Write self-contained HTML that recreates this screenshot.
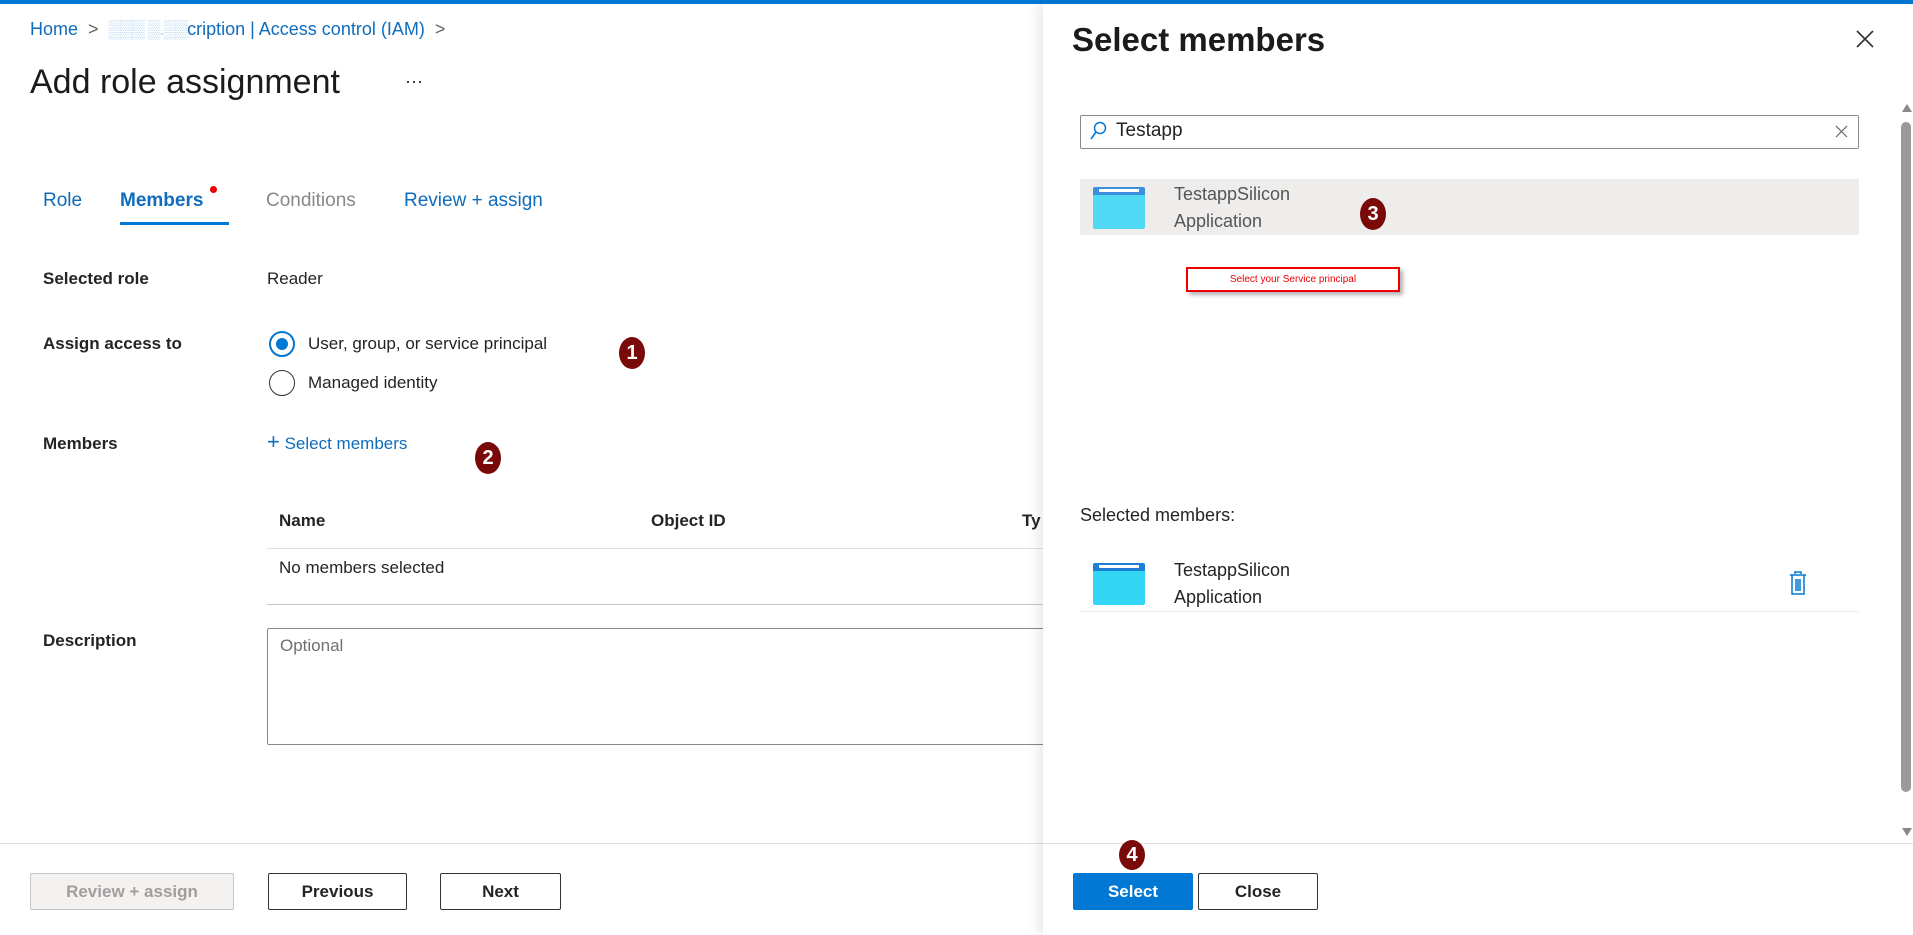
<!DOCTYPE html>
<html><head><meta charset="utf-8"><style>
*{box-sizing:border-box;margin:0;padding:0}
body{width:1913px;height:935px;overflow:hidden;background:#fff;font-family:"Liberation Sans",sans-serif;color:#242424;position:relative;font-size:17px}
.a{position:absolute;white-space:nowrap}
.blue{color:#0f6cbd}
.b{font-weight:bold}
.badge{position:absolute;width:26px;height:32px;border-radius:50%;background:#7a0a0a;color:#fff;font-weight:bold;font-size:20px;text-align:center;line-height:32px}
.btn{position:absolute;height:37px;border:1px solid #333;border-radius:2px;text-align:center;line-height:35px;font-size:17px;font-weight:bold;background:#fff}
.hl{position:absolute;height:1px;background:#e1dfdd}
</style></head><body>
<div class="a" style="left:0;top:0;width:1913px;height:4px;background:#0078d4"></div>
<div class="a blue" style="left:30px;top:19px;font-size:18px">Home <span style="color:#666">&nbsp;&gt;&nbsp;</span> <span style="color:#b9d7f2;letter-spacing:-1px">▒▒▒ ▒.▒▒</span>cription | Access control (IAM) <span style="color:#666">&nbsp;&gt;</span></div>
<div class="a" style="left:30px;top:63px;font-size:34px;color:#1b1b1b">Add role assignment</div>
<div class="a" style="left:405px;top:71px;font-size:18px">···</div>
<div class="a blue" style="left:43px;top:190px;font-size:19px">Role</div>
<div class="a blue b" style="left:120px;top:190px;font-size:19px;color:#0f6cbd">Members</div>
<div class="a" style="left:210px;top:186px;width:7px;height:7px;border-radius:50%;background:#e00"></div>
<div class="a" style="left:120px;top:222px;width:109px;height:3px;background:#0078d4"></div>
<div class="a" style="left:266px;top:190px;font-size:19px;color:#8a8886">Conditions</div>
<div class="a blue" style="left:404px;top:190px;font-size:19px">Review + assign</div>

<div class="a b" style="left:43px;top:269px">Selected role</div>
<div class="a" style="left:267px;top:269px">Reader</div>
<div class="a b" style="left:43px;top:334px">Assign access to</div>
<div class="a" style="left:269px;top:331px;width:26px;height:26px;border:2px solid #0078d4;border-radius:50%"></div>
<div class="a" style="left:276px;top:338px;width:12px;height:12px;border-radius:50%;background:#0078d4"></div>
<div class="a" style="left:308px;top:334px">User, group, or service principal</div>
<div class="a" style="left:269px;top:370px;width:26px;height:26px;border:1.5px solid #333;border-radius:50%"></div>
<div class="a" style="left:308px;top:373px">Managed identity</div>
<div class="badge" style="left:619px;top:337px">1</div>
<div class="a b" style="left:43px;top:434px">Members</div>
<div class="a blue" style="left:267px;top:432px"><span style="font-size:22px;line-height:20px">+</span> Select members</div>
<div class="badge" style="left:475px;top:442px">2</div>
<div class="a b" style="left:279px;top:511px;font-weight:600">Name</div>
<div class="a b" style="left:651px;top:511px">Object ID</div>
<div class="a b" style="left:1022px;top:511px">Ty</div>
<div class="hl" style="left:267px;top:548px;width:780px"></div>
<div class="a" style="left:279px;top:558px">No members selected</div>
<div class="hl" style="left:267px;top:604px;width:780px;background:#c8c6c4"></div>
<div class="a b" style="left:43px;top:631px">Description</div>
<div class="a" style="left:267px;top:628px;width:800px;height:117px;border:1px solid #8a8886;border-radius:2px"></div>
<div class="a" style="left:280px;top:636px;color:#707070">Optional</div>
<div class="hl" style="left:0;top:843px;width:1043px"></div>
<div class="btn" style="left:30px;top:873px;width:204px;border-color:#c8c6c4;background:#f3f2f1;color:#a19f9d">Review + assign</div>
<div class="btn" style="left:268px;top:873px;width:139px">Previous</div>
<div class="btn" style="left:440px;top:873px;width:121px">Next</div>

<!-- panel -->
<div class="a" style="left:1043px;top:4px;width:870px;height:931px;background:#fff;box-shadow:-6px 0 10px rgba(0,0,0,0.08)"></div>
<div class="a" style="left:1072px;top:21px;font-size:33px;font-weight:600;color:#1b1b1b">Select members</div>
<svg class="a" style="left:1856px;top:30px" width="18" height="18"><path d="M1 1L17 17M17 1L1 17" stroke="#333" stroke-width="1.6"/></svg>
<div class="a" style="left:1080px;top:115px;width:779px;height:34px;border:1px solid #8a8886;border-radius:2px"></div>
<svg class="a" style="left:1089px;top:121px" width="18" height="20"><circle cx="11" cy="7" r="5.5" fill="none" stroke="#0078d4" stroke-width="1.5"/><path d="M7 11L2 18" stroke="#0078d4" stroke-width="1.6"/></svg>
<div class="a" style="left:1116px;top:120px;font-size:19px">Testapp</div>
<svg class="a" style="left:1835px;top:125px" width="13" height="13"><path d="M1 1L12 12M12 1L1 12" stroke="#666" stroke-width="1.2"/></svg>
<div class="a" style="left:1080px;top:179px;width:779px;height:56px;background:#efedec"></div>
<div class="a" style="left:1093px;top:187px;width:52px;height:42px;background:#50d9f5;border-radius:2px;border-top:8px solid #3d8fe0"></div>
<div class="a" style="left:1099px;top:189px;width:40px;height:3px;background:#fff"></div>
<div class="a" style="left:1174px;top:184px;font-size:18px;color:#555">TestappSilicon</div>
<div class="a" style="left:1174px;top:211px;font-size:18px;color:#555">Application</div>
<div class="badge" style="left:1360px;top:198px">3</div>
<div class="a" style="left:1186px;top:267px;width:214px;height:25px;border:2px solid #e00;box-shadow:3px 3px 4px rgba(0,0,0,0.3);color:#e00;font-size:10px;text-align:center;line-height:21px">Select your Service principal</div>
<div class="a" style="left:1080px;top:505px;font-size:18px">Selected members:</div>
<div class="a" style="left:1093px;top:563px;width:52px;height:42px;background:#33d6f5;border-radius:2px;border-top:8px solid #1e7fd6"></div>
<div class="a" style="left:1099px;top:565px;width:40px;height:3px;background:#fff"></div>
<div class="a" style="left:1174px;top:560px;font-size:18px">TestappSilicon</div>
<div class="a" style="left:1174px;top:587px;font-size:18px">Application</div>
<svg class="a" style="left:1788px;top:571px" width="20" height="25"><path d="M7 3V1H13V3M2 4H18M4 4V23H16V4M8 8V20M10 8V20M12 8V20" fill="none" stroke="#0078d4" stroke-width="1.5"/></svg>
<div class="hl" style="left:1080px;top:611px;width:779px;background:#edebe9"></div>
<div class="a" style="left:1901px;top:122px;width:10px;height:670px;background:#9a9a9a;border-radius:5px"></div>
<div class="a" style="left:1902px;top:104px;width:0;height:0;border-left:5px solid transparent;border-right:5px solid transparent;border-bottom:8px solid #888"></div>
<div class="a" style="left:1902px;top:828px;width:0;height:0;border-left:5px solid transparent;border-right:5px solid transparent;border-top:8px solid #888"></div>
<div class="hl" style="left:1043px;top:843px;width:870px"></div>
<div class="badge" style="left:1119px;top:840px;height:30px;line-height:30px">4</div>
<div class="btn" style="left:1073px;top:873px;width:120px;background:#0078d4;border-color:#0078d4;color:#fff">Select</div>
<div class="btn" style="left:1198px;top:873px;width:120px">Close</div>
</body></html>
